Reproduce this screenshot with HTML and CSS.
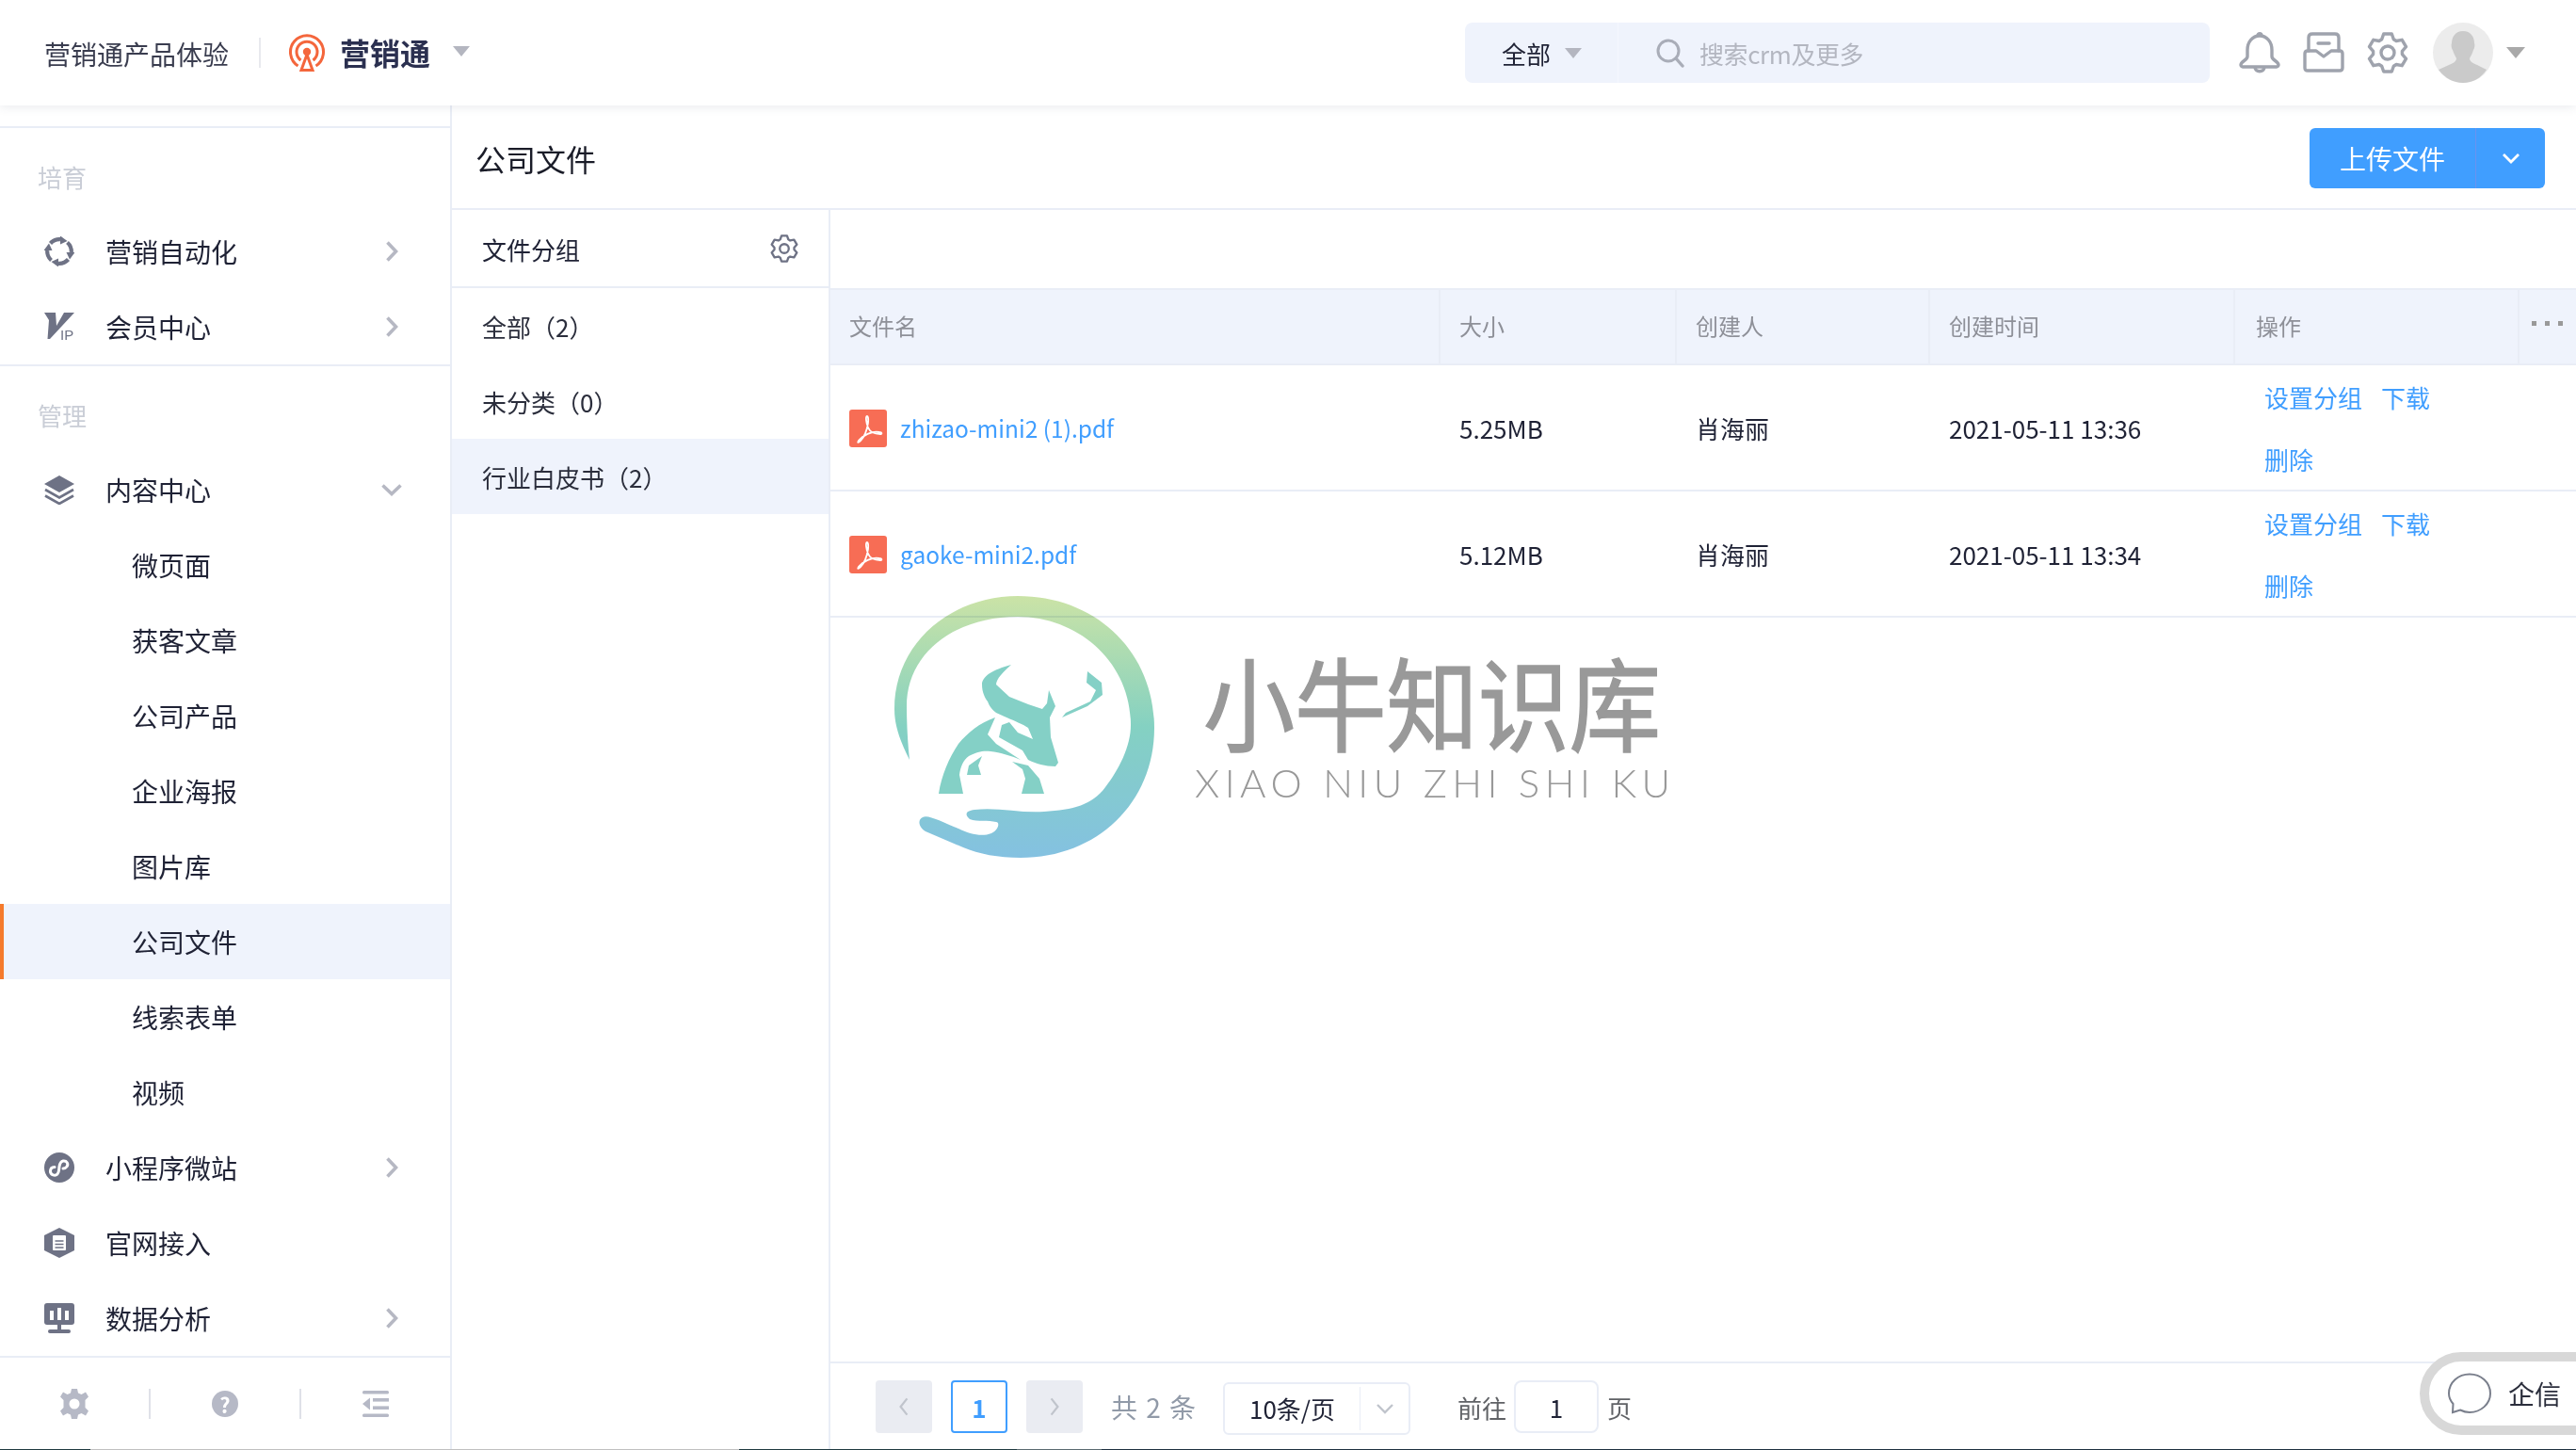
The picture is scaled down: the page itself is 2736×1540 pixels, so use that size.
FILE: index.html
```html
<!DOCTYPE html>
<html lang="zh-CN">
<head>
<meta charset="utf-8">
<title>公司文件</title>
<link rel="stylesheet" href="styles.css">
</head>
<body>
<svg class="defs" width="0" height="0" aria-hidden="true">
  <defs>
    <symbol id="chev-r" viewBox="0 0 14 24"><path d="M2.500 2.500 L11.500 12 L2.500 21.500" fill="none" stroke="currentColor" stroke-width="3.600"/></symbol>
    <symbol id="gear" viewBox="0 0 44 44"><path d="M15.700 7.800 L17.700 2 H26.300 L28.300 7.800 L31.100 9.500 L37.200 8.300 L41.500 15.700 L37.400 20.400 V23.600 L41.500 28.300 L37.200 35.700 L31.100 34.500 L28.300 36.200 L26.300 42 H17.700 L15.700 36.200 L12.900 34.500 L6.800 35.700 L2.500 28.300 L6.600 23.600 V20.400 L2.500 15.700 L6.800 8.300 L12.900 9.500 Z" fill="none" stroke="currentColor" stroke-width="3.400" stroke-linejoin="round"/><circle cx="22" cy="22" r="7" fill="none" stroke="currentColor" stroke-width="3.400"/></symbol>
    <symbol id="pdf" viewBox="0 0 40 40"><rect width="40" height="40" rx="3" fill="#f76d55"/><path d="M19 7 C17 7 18 14 20 19 C22 24 26 26 33 26 C35 26 35 24 32 24 C25 23 17 26 11 32 C8 35 9 36 12 33 C16 29 19 21 20 14 C20.500 10 20 7 19 7 Z" fill="none" stroke="#fff" stroke-width="1.800"/></symbol>
    <symbol id="cyc-seg" viewBox="0 0 32 32"><path d="M6.500 7.500 A13 13 0 0 1 17 3.200" fill="none" stroke="#6e7285" stroke-width="4.200"/><path d="M17 -0.500 L24.500 5 L17 8.500 Z" fill="#6e7285"/></symbol>
  </defs>
</svg>

<div class="app">
  <header class="topbar">
    <span class="org">营销通产品体验</span>
    <span class="top-sep"></span>
    <svg class="logo" viewBox="0 0 40 40" width="40" height="40"><g fill="none" stroke="#f4663c" stroke-width="3"><path d="M10.500 34 A17.500 17.500 0 1 1 29.500 34"/><path d="M13.500 28 A11 11 0 1 1 26.500 28"/><path d="M20 22 L26 38.500 H14 Z"/></g><circle cx="20" cy="19" r="4.200" fill="#f4663c"/></svg>
    <span class="brand">营销通</span>
    <span class="caret brand-caret"></span>
    <div class="search">
      <div class="search-scope"><span>全部</span><span class="caret scope-caret"></span></div>
      <svg class="search-icon" viewBox="0 0 32 32" width="32" height="32"><circle cx="14" cy="14" r="11" fill="none" stroke="#a9adb8" stroke-width="3"/><path d="M22 22 L29 30" stroke="#a9adb8" stroke-width="3.400" stroke-linecap="round"/></svg>
      <span class="placeholder">搜索crm及更多</span>
    </div>
    <svg class="tool first" viewBox="0 0 44 44" width="44" height="44"><g fill="none" stroke="#9fa3ad" stroke-width="3.400" stroke-linejoin="round"><path d="M22 4 C30 4 35 11 35 19 V26 C35 30 42 31 42 35 C42 36 41 37 40 37 H4 C3 37 2 36 2 35 C2 31 9 30 9 26 V19 C9 11 14 4 22 4 Z"/><path d="M17 38 C18 43 26 43 27 38"/><path d="M20 4 C20 1 24 1 24 4"/></g></svg>
    <svg class="tool" viewBox="0 0 44 44" width="44" height="44"><g fill="none" stroke="#9fa3ad" stroke-width="3.400" stroke-linejoin="round" stroke-linecap="round"><path d="M6 20 V6 C6 3 8 2 10 2 H34 C36 2 38 3 38 6 V20"/><path d="M2 23 C2 21 3 20 5 20 H14 L22 26 L30 20 H39 C41 20 42 21 42 23 V38 C42 40 41 41 39 41 H5 C3 41 2 40 2 38 Z"/><path d="M16 12 H28"/></g></svg>
    <svg class="tool" width="44" height="44"><use href="#gear" color="#9fa3ad"/></svg>
    <svg class="avatar" viewBox="0 0 64 64" width="64" height="64"><circle cx="32" cy="32" r="32" fill="#ececec"/><path d="M32 9 C40 9 44 15 44 22 C45 24 44 28 43 29 C42 33 40 36 39 38 C39 41 42 43 47 45 L57 50 C51 59 42 64 32 64 C22 64 13 59 6 50 L17 45 C22 43 25 41 25 38 C24 36 22 33 21 29 C20 28 19 24 20 22 C20 15 24 9 32 9 Z" fill="#cacaca"/></svg>
    <span class="caret avatar-caret"></span>
  </header>

  <div class="body">
    <aside class="sidebar">
      <nav class="nav">
        <section class="nav-group">
          <h2 class="nav-label">培育</h2>
          <a class="nav-item">
            <svg class="nav-icon" viewBox="0 0 32 32" width="32" height="32"><use href="#cyc-seg" width="32" height="32"/><use href="#cyc-seg" width="32" height="32" transform="rotate(90 16 16)"/><use href="#cyc-seg" width="32" height="32" transform="rotate(180 16 16)"/><use href="#cyc-seg" width="32" height="32" transform="rotate(270 16 16)"/></svg>
            <span class="nav-text">营销自动化</span>
            <svg class="chev" width="14" height="24"><use href="#chev-r"/></svg>
          </a>
          <a class="nav-item">
            <svg class="nav-icon" viewBox="0 0 32 32" width="32" height="32"><path d="M0 1 H12 L13 15 L21 1 H32 L6 29 H3.500 L5 9 Z" fill="#6e7285"/><text x="17" y="30" class="vip-ip">IP</text></svg>
            <span class="nav-text">会员中心</span>
            <svg class="chev" width="14" height="24"><use href="#chev-r"/></svg>
          </a>
        </section>
        <section class="nav-group">
          <h2 class="nav-label">管理</h2>
          <a class="nav-item">
            <svg class="nav-icon" viewBox="0 0 32 32" width="32" height="32"><path d="M16 1 L32 10 L16 19 L0 10 Z" fill="#6e7285"/><path d="M1 16 L16 24.500 L31 16 M1 22.500 L16 31 L31 22.500" fill="none" stroke="#6e7285" stroke-width="2.600"/></svg>
            <span class="nav-text">内容中心</span>
            <svg class="chev chev-down" width="14" height="24"><use href="#chev-r"/></svg>
          </a>
          <a class="nav-sub">微页面</a>
          <a class="nav-sub">获客文章</a>
          <a class="nav-sub">公司产品</a>
          <a class="nav-sub">企业海报</a>
          <a class="nav-sub">图片库</a>
          <a class="nav-sub active">公司文件</a>
          <a class="nav-sub">线索表单</a>
          <a class="nav-sub">视频</a>
          <a class="nav-item">
            <svg class="nav-icon" viewBox="0 0 32 32" width="32" height="32"><circle cx="16" cy="16" r="16" fill="#6e7285"/><path d="M6.500 20 C6.500 24 11.500 25.500 14 23 C16 21 15.500 18 16 15 C16.500 12 17 9.500 20 9 C24 8.500 26 12 24 15 C23 16.500 21.500 17 20 17" fill="none" stroke="#fff" stroke-width="3" stroke-linecap="round"/><path d="M6.500 20 C6.500 17 8.500 15.500 11 15.500" fill="none" stroke="#fff" stroke-width="3" stroke-linecap="round"/></svg>
            <span class="nav-text">小程序微站</span>
            <svg class="chev" width="14" height="24"><use href="#chev-r"/></svg>
          </a>
          <a class="nav-item">
            <svg class="nav-icon" viewBox="0 0 32 32" width="32" height="32"><path d="M16 0 L32 8 V24 L16 32 L0 24 V8 Z" fill="#6e7285"/><rect x="9" y="8" width="14" height="16" rx="1" fill="#fff"/><path d="M11.500 14 H20.500 M11.500 17.500 H20.500 M11.500 21 H20.500" stroke="#6e7285" stroke-width="1.300"/></svg>
            <span class="nav-text">官网接入</span>
          </a>
          <a class="nav-item">
            <svg class="nav-icon" viewBox="0 0 32 32" width="32" height="32"><rect y="0" width="32" height="23" rx="3" fill="#6e7285"/><rect x="6" y="8" width="4" height="10" fill="#fff"/><rect x="14" y="5" width="4" height="13" fill="#fff"/><rect x="22" y="8" width="4" height="10" fill="#fff"/><rect x="14" y="23" width="4" height="5" fill="#6e7285"/><rect x="4" y="28" width="24" height="4" rx="2" fill="#6e7285"/></svg>
            <span class="nav-text">数据分析</span>
            <svg class="chev" width="14" height="24"><use href="#chev-r"/></svg>
          </a>
        </section>
      </nav>
      <footer class="side-foot">
        <span class="foot-cell"><svg viewBox="0 0 32 32" width="32" height="32"><path d="M13 0 H19 L20 4.500 L23.500 6 L28 3.500 L31 8.500 L27.500 12 V20 L31 23.500 L28 28.500 L23.500 26 L20 27.500 L19 32 H13 L12 27.500 L8.500 26 L4 28.500 L1 23.500 L4.500 20 V12 L1 8.500 L4 3.500 L8.500 6 L12 4.500 Z" fill="#b6b9c6"/><circle cx="16" cy="16" r="5.500" fill="#fff"/></svg></span>
        <span class="foot-sep"></span>
        <span class="foot-cell"><span class="help">?</span></span>
        <span class="foot-sep"></span>
        <span class="foot-cell"><svg viewBox="0 0 28 28" width="28" height="28"><g fill="#b6b9c6"><rect width="28" height="3.600" rx="1.500"/><rect y="24.400" width="28" height="3.600" rx="1.500"/><rect x="11" y="8" width="17" height="3.600"/><rect x="11" y="16.400" width="17" height="3.600"/><path d="M8 7.500 V20.500 L0 14 Z"/></g></svg></span>
      </footer>
    </aside>

    <main class="content">
      <div class="title-bar">
        <h1 class="title">公司文件</h1>
        <div class="upload">
          <span class="upload-main">上传文件</span>
          <span class="upload-more"><svg viewBox="0 0 20 12" width="20" height="12"><path d="M2 2 L10 10 L18 2" fill="none" stroke="#fff" stroke-width="2.800"/></svg></span>
        </div>
      </div>
      <div class="split">
        <div class="groups">
          <div class="groups-head"><span>文件分组</span><svg width="30" height="30" class="groups-gear"><use href="#gear"/></svg></div>
          <div class="group">全部（2）</div>
          <div class="group">未分类（0）</div>
          <div class="group active">行业白皮书（2）</div>
        </div>
        <div class="files">
          <div class="files-bar"></div>
          <div class="table">
            <div class="row head">
              <div class="cell c-name">文件名</div>
              <div class="cell c-size">大小</div>
              <div class="cell c-user">创建人</div>
              <div class="cell c-time">创建时间</div>
              <div class="cell c-ops">操作</div>
              <div class="cell c-more"><span class="dots"><i></i><i></i><i></i></span></div>
            </div>
            <div class="row">
              <div class="cell c-name"><svg width="40" height="40"><use href="#pdf"/></svg><a class="file-link">zhizao-mini2 (1).pdf</a></div>
              <div class="cell c-size">5.25MB</div>
              <div class="cell c-user">肖海丽</div>
              <div class="cell c-time">2021-05-11 13:36</div>
              <div class="cell c-ops ops"><div class="ops-line"><a>设置分组</a><a>下载</a></div><div class="ops-line"><a>删除</a></div></div>
              <div class="cell c-more"></div>
            </div>
            <div class="row">
              <div class="cell c-name"><svg width="40" height="40"><use href="#pdf"/></svg><a class="file-link">gaoke-mini2.pdf</a></div>
              <div class="cell c-size">5.12MB</div>
              <div class="cell c-user">肖海丽</div>
              <div class="cell c-time">2021-05-11 13:34</div>
              <div class="cell c-ops ops"><div class="ops-line"><a>设置分组</a><a>下载</a></div><div class="ops-line"><a>删除</a></div></div>
              <div class="cell c-more"></div>
            </div>
          </div>
          <div class="pager">
            <span class="pg-btn"><svg viewBox="0 0 14 24" width="12" height="22"><path d="M11 2 L3 12 L11 22" fill="none" stroke="#c0c4cc" stroke-width="2.600"/></svg></span>
            <span class="pg-num">1</span>
            <span class="pg-btn"><svg viewBox="0 0 14 24" width="12" height="22"><path d="M3 2 L11 12 L3 22" fill="none" stroke="#c0c4cc" stroke-width="2.600"/></svg></span>
            <span class="pg-total">共 2 条</span>
            <span class="pg-select"><span class="pg-select-val">10条/页</span><span class="pg-select-arrow"><svg viewBox="0 0 20 12" width="20" height="12"><path d="M2 2 L10 10 L18 2" fill="none" stroke="#c0c4cc" stroke-width="2.400"/></svg></span></span>
            <span class="pg-jump">前往</span>
            <span class="pg-input">1</span>
            <span class="pg-jump">页</span>
          </div>
        </div>
      </div>
    </main>
  </div>
</div>

<div class="watermark">
  <svg class="wm-mark" viewBox="0 0 276 278" width="276" height="278">
    <defs><linearGradient id="wmg" x1="0" y1="0" x2="0" y2="1"><stop offset="0" stop-color="#c9e2a3"/><stop offset=".5" stop-color="#80d0c0"/><stop offset="1" stop-color="#80bfe0"/></linearGradient></defs>
    <path fill="url(#wmg)" d="M16 174 C4 150 0 135 0 120 C0 50 60 0 131 0 C215 0 276 60 276 140 C276 220 215 278 134 278 C110 278 90 274 73 267 L33 250 C26 246 24 238 30 235 C36 232 50 240 68 247 C80 253 93 256 103 252 C111 248 112 240 108 240 C100 238 88 240 80 237 C74 232 76 228 85 227 C110 224 135 231 159 229 C190 227 210 222 224 203 C238 185 251 160 251 137 C251 70 195 22 131 22 C65 22 13 60 13 117 C13 135 14 155 16 174 Z"/>
    <g fill="#80cfc4">
      <path d="M124 73 C105 78 93 85 93 94 C93 102 96 108 99 112 C102 120 106 122 108 124 C120 130 135 135 142 140 L147 152 L131 145 L122 134 L114 137 L111 150 L136 164 L142 174 C150 178 160 181 171 181 L174 177 L166 150 L165 129 L171 117 L164 100 L162 114 L157 120 L142 115 L122 107 L108 94 C108 88 116 80 124 73 Z"/>
      <path d="M107 129 C90 135 78 145 68 157 C58 172 50 190 47 210 H73 L69 190 C70 182 73 174 79 170 C88 165 95 164 102 165 C112 166 125 170 134 174 L108 157 L99 147 Z"/>
      <path d="M93 170 L79 180 L77 190 H92 L89 180 Z"/>
      <path d="M125 176 L142 180 L154 194 L159 210 H135 L139 194 L136 184 Z"/>
      <path d="M205 80 L220 92 L221 105 L205 117 L178 129 L182 124 L208 112 L214 100 L204 92 Z"/>
    </g>
  </svg>
  <div class="wm-text">
    <div class="wm-cn">小牛知识库</div>
    <div class="wm-en">XIAO NIU ZHI SHI KU</div>
  </div>
</div>

<div class="chat">
  <svg viewBox="0 0 46 44" width="46" height="44"><path d="M5 42 L5.500 33 C2.500 29.500 1 26 1 22 C1 10 11 1.500 23 1.500 C35 1.500 45 10 45 22 C45 33 35 42 23 42 C19.500 42 16 41 13 39.500 Z" fill="none" stroke="#7a7f8c" stroke-width="2"/></svg>
  <span class="chat-text">企信</span>
</div>

<div class="edge"><i class="e1"></i><i class="e2"></i><i class="e3"></i><i class="e4"></i><i class="e5"></i></div>
</body>
</html>
```

FILE: styles.css
```css
* { box-sizing: border-box; }
html, body { margin: 0; height: 1540px; overflow: hidden; background: #fff; }
body {
  position: relative;
  font-family: "Noto Sans CJK SC", "Noto Sans", sans-serif;
  color: #1f2235;
  font-size: 26px;
}
a { color: inherit; text-decoration: none; }
h1, h2 { margin: 0; font-weight: 400; }
.defs { position: absolute; }

.app { display: flex; flex-direction: column; height: 1539px; }

.topbar {
  position: relative;
  z-index: 2;
  flex: 0 0 112px;
  display: flex;
  align-items: center;
  padding: 0 54px 0 47px;
  background: #fff;
  box-shadow: 0 2px 10px rgba(60, 70, 100, .10);
}
.org { font-size: 28px; color: #3a3d4f; line-height: 1; position: relative; top: 1px; }
.top-sep { width: 2px; height: 32px; margin: 0 27px 0 32px; background: #e8e9ee; }
.logo { flex: none; margin-left: 2px; }
.brand { margin-left: 15px; margin-top: -2px; font-size: 32px; font-weight: 700; color: #2b3050; line-height: 1; }
.caret { display: inline-block; width: 0; height: 0; border-style: solid; border-color: #b4b6c0 transparent transparent; }
.brand-caret { margin-left: 24px; border-width: 11px 9.500px 0; margin-top: -3px; }
.search {
  margin-left: auto;
  width: 791px;
  height: 64px;
  display: flex;
  align-items: center;
  background: #eff3fc;
  border-radius: 8px;
}
.search-scope { width: 163px; height: 100%; display: flex; align-items: center; padding-left: 39px; color: #1f2235; border-right: 1px solid #f4f6fd; }
.scope-caret { margin-left: 15px; border-width: 11px 9px 0; }
.search-icon { flex: none; margin-left: 39px; }
.placeholder { margin-left: 15px; color: #b3b6c0; font-size: 26px; letter-spacing: -.4px; }
.tool { flex: none; margin-left: 24px; }
.tool.first { margin-left: 31px; }
.avatar { flex: none; margin-left: 26px; }
.avatar-caret { margin-left: 14px; border-width: 12px 10px 0; border-top-color: #a9a9a9; }

.body { flex: 1; display: flex; min-height: 0; }

.sidebar {
  flex: 0 0 479px;
  display: flex;
  flex-direction: column;
  border-right: 2px solid #e9edf6;
  padding-top: 22px;
}
.nav { flex: 0 0 auto; }
.nav-group { border-top: 2px solid #e9edf6; }
.nav-label { height: 91px; padding: 30px 0 0 40px; font-size: 26px; line-height: 44px; color: #c9cdd6; }
.nav-item { height: 80px; display: flex; align-items: center; padding-left: 47px; font-size: 28px; }
.nav-icon { flex: none; }
.nav-text { margin-left: 33px; flex: 1; }
.chev { flex: none; margin-right: 55px; color: #b6b8c3; }
.chev-down { transform: rotate(90deg); }
.nav-sub { height: 80px; display: flex; align-items: center; padding-left: 140px; font-size: 28px; }
.nav-sub.active { background: #eff3fc; border-left: 4px solid #f57a2c; padding-left: 136px; }
.vip-ip { font-family: "Liberation Sans", sans-serif; font-size: 15px; fill: #6e7285; }

.side-foot {
  flex: 1;
  display: flex;
  align-items: center;
  border-top: 2px solid #e9edf6;
}
.foot-cell { width: 158px; display: flex; justify-content: center; }
.foot-sep { width: 2px; height: 32px; background: #dfe1e8; }
.help {
  width: 28px; height: 28px; border-radius: 50%;
  background: #b6b9c6; color: #fff;
  font-size: 22px; font-weight: 700; line-height: 28px; text-align: center;
}

.content { flex: 1; min-width: 0; display: flex; flex-direction: column; }
.title-bar {
  flex: 0 0 111px;
  display: flex;
  align-items: center;
  justify-content: space-between;
  padding: 2px 33px 0 25px;
  border-bottom: 2px solid #e9edf6;
}
.title { font-size: 32px; color: #1a1c28; }
.upload { display: flex; height: 64px; margin-top: 1px; border-radius: 6px; overflow: hidden; background: #409eff; color: #fff; font-size: 28px; }
.upload-main { width: 177px; display: flex; align-items: center; justify-content: center; border-right: 1px solid #6a92f0; }
.upload-more { width: 73px; display: flex; align-items: center; justify-content: center; }

.split { flex: 1; display: flex; min-height: 0; }
.groups { flex: 0 0 402px; border-right: 2px solid #e9edf6; }
.groups-head {
  height: 83px;
  display: flex; align-items: center; justify-content: space-between;
  padding: 1px 32px 0 32px;
  border-bottom: 2px solid #e9edf6;
}
.groups-gear { color: #6e7285; }
.group { height: 80px; display: flex; align-items: center; padding-left: 32px; color: #2b2e3c; }
.group.active { background: #eff3fc; }

.files { flex: 1; min-width: 0; display: flex; flex-direction: column; }
.files-bar { flex: 0 0 83px; }
.table { flex: 1; }
.row {
  display: grid;
  grid-template-columns: 648px 251px 269px 324px 302px 1fr;
  height: 134px;
  border-bottom: 2px solid #e9edf6;
}
.row.head { height: 82px; background: #eff3fc; color: #8e9098; font-size: 24px; border-top: 2px solid #e9edf6; }
.cell { display: flex; align-items: center; padding-left: 20px; min-width: 0; }
.row.head .cell { border-right: 2px solid #e9edf6; padding-bottom: 4px; }
.row.head .cell:last-child { border-right: 0; }
.c-name svg { flex: none; }
.file-link { margin-left: 14px; color: #409eff; font-size: 24.500px; }
.row.head .c-ops { padding-left: 22px; }
.c-more { padding-left: 0; }
.dots { display: flex; gap: 9px; margin: -4px 0 0 13px; }
.dots i { width: 5px; height: 5px; background: #999; }
.ops { flex-direction: column; align-items: flex-start; justify-content: center; padding-left: 31px; padding-bottom: 1px; color: #409eff; }
.ops-line { height: 66px; display: flex; align-items: center; gap: 20px; }

.pager {
  flex: 0 0 93px;
  display: flex;
  align-items: center;
  padding: 1px 0 0 48px;
  border-top: 2px solid #e9edf6;
}
.pg-btn { width: 60px; height: 56px; background: #eaecf2; border-radius: 4px; display: flex; align-items: center; justify-content: center; }
.pg-num { width: 60px; height: 56px; margin: 0 20px; border: 2px solid #409eff; border-radius: 4px; color: #409eff; font-weight: 700; display: flex; align-items: center; justify-content: center; }
.pg-total { margin-left: 30px; color: #919aa8; font-size: 28px; width: 119px; word-spacing: 3px; }
.pg-select { width: 199px; height: 56px; margin-top: 3px; display: flex; border: 2px solid #e9edf6; border-radius: 6px; }
.pg-select-val { width: 144px; border-right: 1px solid #e9edf6; display: flex; align-items: center; justify-content: center; color: #1f2235; margin: 3px 0; }
.pg-select-arrow { flex: 1; display: flex; align-items: center; justify-content: center; }
.pg-jump { color: #606266; margin-left: 50px; }
.pg-input { width: 90px; height: 56px; margin: 0 9px 0 8px; border: 2px solid #e9edf6; border-radius: 8px; display: flex; align-items: center; justify-content: center; }
.pg-input + .pg-jump { margin-left: 0; }

/* overlays */
.watermark {
  position: absolute;
  left: 950px;
  top: 633px;
  display: flex;
  align-items: flex-start;
  gap: 43px;
  pointer-events: none;
}
.wm-mark { flex: none; opacity: .97; mix-blend-mode: multiply; }
.wm-text { padding-top: 56px; color: #999; width: 510px; }
.wm-cn { font-size: 108px; line-height: 108px; padding-left: 10px; -webkit-text-stroke: 1.500px #999; white-space: nowrap; transform: scaleX(.9); transform-origin: left center; }
.wm-en { font-family: Lato, "Noto Sans", sans-serif; font-weight: 300; font-size: 42px; line-height: 42px; letter-spacing: 5.500px; margin-top: 13px; white-space: nowrap; }

.chat {
  position: absolute;
  left: 2570px;
  top: 1436px;
  width: 240px;
  height: 88px;
  display: flex;
  align-items: center;
  padding-left: 20px;
  background: #fff;
  border: 10px solid #d8d8d8;
  border-radius: 44px;
}
.chat-text { margin-left: 18px; font-size: 28px; color: #2b2e3c; }

.edge { position: absolute; left: 0; right: 0; bottom: 0; height: 1px; display: flex; }
.edge i { display: block; }
.e1 { width: 96px; background: #1f3a40; }
.e2 { width: 689px; background: #c0c0c0; }
.e3 { width: 295px; background: #1f3a40; }
.e4 { width: 90px; background: #5a6a70; }
.e5 { flex: 1; background: #1e3040; }
```
